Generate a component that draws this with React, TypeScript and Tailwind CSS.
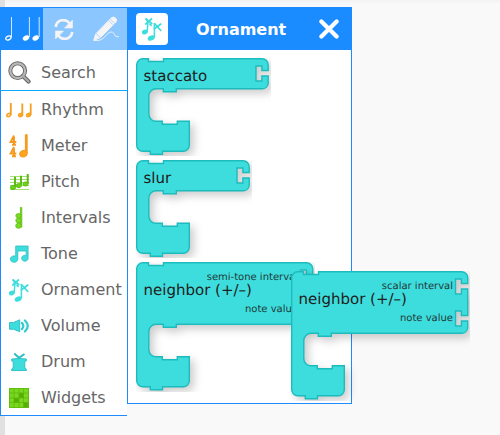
import React from "react";

type Port = number;

function blockPath(w: number, h: number, ports: Port[]) {
  const r = w - 0.3;
  let d = `M.7 6.5A6 6 0 0 1 6.7.7H12.5V3.5H27.5V.7H${r - 6}A6 6 0 0 1 ${r} 6.7`;
  ports.forEach((y) => {
    d += `V${y + 4.5}H${r - 6.3}V${y}H${r - 12.2}V${y + 15}H${r - 6.3}V${y + 10}H${r}`;
  });
  d += `V${h - 5.5}A6 6 0 0 1 ${r - 6} ${h - 0.2}H40.3V${h + 2.8}H27.3V${h - 0.2}H20A7.2 7.2 0 0 0 12.8 ${h + 7}V${h + 25.1}A7.2 7.2 0 0 0 20 ${h + 32.3}H26.3V${h + 35.3}H41.3V${h + 32.3}H53.3V${h + 56.3}A6 6 0 0 1 47.3 ${h + 62.3}H26.5V${h + 65.3}H14.3V${h + 62.3}H6.7A6 6 0 0 1 .7 ${h + 56.3}Z`;
  return d;
}

function Block({ w, h, label, labelY, ports, args = [] }: {
  w: number; h: number; label: string; labelY: number; ports: Port[]; args?: string[];
}) {
  return (
    <svg width={w + 2} height={h + 67} className="block shrink-0 overflow-hidden font-['DejaVu_Sans',sans-serif]">
      <path d={blockPath(w, h, ports)} fill="#3edddd" stroke="#1cbcbe" strokeWidth="1.4" className="[filter:drop-shadow(4px_4px_4px_rgba(0,0,0,0.2))]" />
      <text x="7.5" y={labelY} fontSize="15" fill="#202020" textRendering="geometricPrecision">{label}</text>
      {args.map((a, i) => (
        <text key={a} x={w - 15} y={18 + i * 32} fontSize="10" textAnchor="end" fill="#1f3a3a" textRendering="geometricPrecision">{a}</text>
      ))}
    </svg>
  );
}

function Notes({ color }: { color: string }) {
  return (
    <svg width="35" height="26" viewBox="0 0 35 26" fill={color} stroke={color}>
      <ellipse cx="3.4" cy="22" rx="2.8" ry="1.9" transform="rotate(-28 3.4 22)" fill="none" strokeWidth="1.3" />
      <path d="M6.5 1V21M24.4 1V21M34.2 1V21" fill="none" strokeWidth=".8" />
      <ellipse cx="21" cy="22" rx="3.2" ry="2.2" transform="rotate(-28 21 22)" strokeWidth=".5" />
      <ellipse cx="30.7" cy="22" rx="3.2" ry="2.2" transform="rotate(-28 30.7 22)" strokeWidth=".5" />
    </svg>
  );
}

function OrnamentIcon() {
  return (
    <svg width="20" height="24" viewBox="0 0 20 24" fill="#3edddd" stroke="#3edddd">
      <path d="M3.5 1.5 10.3 7M10 1.5 3.2 7.5M12.3 6.3 19.2 14M19.4 6.6 11.8 12.3" fill="none" strokeWidth="1.7" />
      <path d="M4.2 1.5 6 6 5 15M12.4 6V20M7.5 6.5 9.5 9M15.5 10l3-3" fill="none" strokeWidth="1.5" />
      <ellipse cx="2.9" cy="15" rx="2.6" ry="1.9" transform="rotate(-20 2.9 15)" />
      <ellipse cx="9.2" cy="21" rx="3.2" ry="2" transform="rotate(-20 9.2 21)" />
    </svg>
  );
}

const icons: Record<string, React.ReactNode> = {
  Rhythm: (
    <svg width="26" height="16" viewBox="0 0 26 16" fill="#ffa826" stroke="#f5a01d">
      <ellipse cx="2.8" cy="13" rx="2" ry="1.4" transform="rotate(-25 2.8 13)" fill="white" strokeWidth="1.5" />
      <path d="M4.8 1V13M16.3 1.5V13M24.7 1.5V13" fill="none" strokeWidth="1.8" />
      <ellipse cx="14.6" cy="13" rx="2.2" ry="1.8" transform="rotate(-25 14.6 13)" />
      <ellipse cx="22.5" cy="13" rx="2.2" ry="1.8" transform="rotate(-25 22.5 13)" />
    </svg>
  ),
  Meter: (
    <svg width="20" height="24" viewBox="0 0 20 24" fill="#ffa21c" stroke="#f49b20">
      <path d="M5 1.5 1.7 8H7.3M5 3V10.5M3 10.7H7M5 13 1.7 19.5H7.3M5 14.5V22M3 22.2H7" fill="none" strokeWidth="2" />
      <path d="M17.3 1.5V19" strokeWidth="2.8" strokeLinecap="round" />
      <ellipse cx="14.4" cy="19.7" rx="3.7" ry="3.2" transform="rotate(-20 14.4 19.7)" />
    </svg>
  ),
  Pitch: (
    <svg width="21" height="18" viewBox="0 0 21 18" fill="#6cd318" stroke="#5dbb16">
      <path d="M1 3.5H20M1 6.5H20M1 9.5H20M1 12.5H20M1 16.5H20" stroke="#8cda4c" strokeWidth=".8" />
      <path d="M6 14V3.7M12 12V2.7M18.7 11V1" strokeWidth="2" />
      <ellipse cx="4" cy="14.5" rx="2.6" ry="2" /><ellipse cx="9.8" cy="12.6" rx="2.6" ry="2" /><ellipse cx="16.5" cy="11" rx="2.6" ry="2" />
    </svg>
  ),
  Intervals: (
    <svg width="8" height="22" viewBox="0 0 8 22" fill="#78dc21" stroke="#60bb12" strokeWidth=".8">
      <path d="M5.4.5H6.8V20H5.4Z" />
      <ellipse cx="3.6" cy="8.7" rx="2.8" ry="2.1" /><ellipse cx="3.6" cy="13.5" rx="2.8" ry="2.3" /><ellipse cx="3.6" cy="18.8" rx="2.9" ry="2.5" />
    </svg>
  ),
  Tone: (
    <svg width="19" height="18" viewBox="0 0 19 18" fill="#3edddd" stroke="#28bec4" strokeWidth=".8">
      <path d="M5.7 1H18.1V13.4A3.2 3 0 1 1 16.2 10.5V6H7.8V14A3.7 3.2 0 1 1 5.7 11.2Z" />
    </svg>
  ),
  Ornament: <OrnamentIcon />,
  Volume: (
    <svg width="21" height="14" viewBox="0 0 21 14" fill="#3edddd" stroke="#28bec4" strokeWidth=".9">
      <path d="M.5 3.5H4.5L10.7.8V12.7L4.5 10.2H.5Z" />
      <path d="M13 4Q15.5 7 13 10M16 1.5Q21.5 7 16 12.5" fill="none" stroke="#32cdd1" strokeWidth="2.3" strokeLinecap="round" />
    </svg>
  ),
  Drum: (
    <svg width="16" height="20" viewBox="0 0 16 20" fill="#3edddd" stroke="#28bec4" strokeWidth=".9">
      <path d="M3.2 1.5 8 5.8 13.5 2" fill="none" strokeWidth="2" />
      <path d="M.7 7Q8 5.8 15.3 7V9L13.8 9.5V16L15.3 17V18.5H.7V17L2.2 16V9.5L.7 9Z" />
    </svg>
  ),
  Widgets: (
    <svg width="20" height="20" viewBox="0 0 20 20">
      <path fill="#78d820" d="M0 0H20V20H0Z" />
      <path fill="#56ae07" d="M10 5h5v5h-5zM5 10h5v5H5zM14.5 14.5h5v5h-5z" />
      <path d="M0 .5H20M0 5H20M0 10H20M0 14.5H20M0 19.5H20M.5 0V20M5 0V20M10 0V20M14.5 0V20M19.5 0V20" stroke="#5db80b" strokeWidth=".8" />
    </svg>
  ),
};

const rows = ["Rhythm", "Meter", "Pitch", "Intervals", "Tone", "Ornament", "Volume", "Drum", "Widgets"];

function MenuRow({ name, icon, className }: { name: string; icon: React.ReactNode; className: string }) {
  return (
    <div className={`flex items-center ${className}`}>
      <span className="flex w-9 shrink-0 items-center justify-center">{icon}</span>
      <span className="ml-1 whitespace-nowrap">{name}</span>
    </div>
  );
}

export default function App() {
  return (
    <main className="relative flex h-[435px] w-[500px] overflow-hidden bg-[#f9f9f9] font-['DejaVu_Sans',sans-serif]">
      <div className="flex w-full border-l-[5px] border-[#e0e0e0] bg-gradient-to-b from-[#f3f3f3] to-[#f9f9f9] to-[4px] pt-[7px]">
        <aside className="-ml-[5px] h-[409px] w-[127px] shrink-0 border-b border-l border-[#1e8cff] bg-white text-base leading-5 text-[#666]">
          <div className="-ml-px flex h-[43px] border-t border-[#1e8cff] bg-[#8cc6ff]">
            <div className="flex w-[43px] items-center bg-[#1b8cff] pl-[5px]"><Notes color="white" /></div>
            <div className="flex w-[42px] items-center justify-center">
              <svg width="20" height="21" viewBox="0 0 20 21" fill="#f4f4f4" stroke="#f4f4f4">
                <path d="M1.7 8C3 0 12-1 16 5M18.3 13C17 21 8 22 4 16" fill="none" strokeWidth="2.7" />
                <path d="M18.5 1V9H10.5ZM1.5 20V12H9.5Z" strokeWidth=".6" />
              </svg>
            </div>
            <div className="flex w-[42px] items-center pl-2">
              <svg width="27" height="26" viewBox="0 0 27 26" fill="#f4f4f4" stroke="#f4f4f4">
                <path d="m.7 24.5 2-6.5L18.5 1.7Q20.3.3 22.6 2.2 24.6 4.2 23.2 5.8L7.5 21.5Z" />
                <path d="m17 3 5.4 5M15.6 4.6l5.2 5M2.8 17.5l4.8 4" stroke="#a7cff7" strokeWidth=".8" />
                <path d="M1 24.5C12 26 13 16 18 16S20 22 26 20.5" fill="none" strokeWidth=".9" />
              </svg>
            </div>
          </div>
          <MenuRow name="Search" className="h-[41px] border-b border-[#08aaff] pt-[5px]" icon={
            <svg width="23" height="23" viewBox="0 0 23 23" fill="none">
              <path d="m15 15 5.5 5.5" stroke="#666" strokeWidth="4.2" strokeLinecap="round" />
              <circle cx="9.7" cy="9.7" r="7.4" stroke="#666" strokeWidth="4" />
              <circle cx="9.7" cy="9.7" r="7.4" stroke="#b8b8b8" strokeWidth="2.2" />
              <path d="m15 15 5.5 5.5" stroke="#aaa" strokeWidth="2.1" strokeLinecap="round" />
            </svg>
          } />
          <nav className="pt-px">
            {rows.map((name) => <MenuRow key={name} name={name} icon={icons[name]} className="h-9" />)}
          </nav>
        </aside>
        <section className="h-[397px] w-[225px] shrink-0 overflow-hidden border border-[#1e8cff] bg-white">
          <header className="flex h-[42px] items-center bg-[#1b8cff] text-white">
            <div className="ml-2 flex size-8 items-center justify-center rounded bg-white"><OrnamentIcon /></div>
            <h1 className="ml-[28px] w-[94px] pt-0.5 text-base font-bold">Ornament</h1>
            <svg width="20" height="20" viewBox="0 0 20 20" className="ml-[29px]"><path d="m2.4 2.4 15.2 15.2m0-15.2L2.4 17.6" fill="none" stroke="white" strokeWidth="4.2" strokeLinecap="round" /></svg>
          </header>
          <div className="flex flex-col gap-1 pl-2 pt-2">
            <Block w={132.5} h={31} label="staccato" labelY={23} ports={[8]} />
            <Block w={113.5} h={31} label="slur" labelY={23} ports={[8]} />
            <Block w={177} h={62.5} label="neighbor (+/–)" labelY={33} ports={[8, 40]} args={["semi-tone interval", "note value"]} />
          </div>
        </section>
      </div>
      <div className="absolute left-[291px] top-[271px]">
        <Block w={177} h={62.5} label="neighbor (+/–)" labelY={33} ports={[8, 40]} args={["scalar interval", "note value"]} />
      </div>
    </main>
  );
}
